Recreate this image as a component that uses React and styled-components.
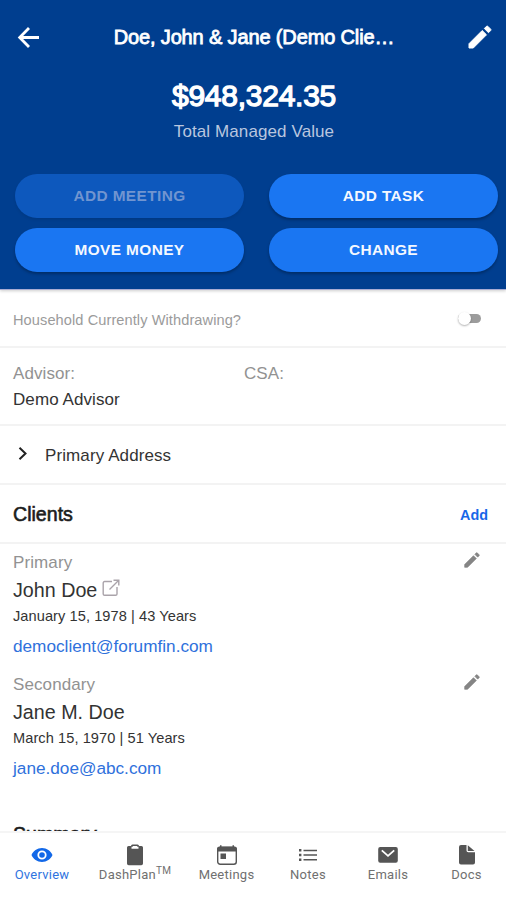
import React from 'react'
import styled, { createGlobalStyle } from 'styled-components'

const GlobalStyle = createGlobalStyle`
  * {
    box-sizing: border-box;
  }
  body {
    margin: 0;
    background: #fff;
    font-family: "Liberation Sans", Arial, sans-serif;
    color: #333;
  }
`

const Page = styled.div`
  height: 900px;
  display: flex;
  flex-direction: column;
  overflow: hidden;
`

const Header = styled.header`
  height: 290px;
  flex: none;
  background: #003e8f;
  border-bottom: 1px solid #a9acd3;
  box-shadow: 0 1px 3px rgba(0, 0, 0, .2);
  color: #fff;
`

const Toolbar = styled.div`
  height: 74px;
  padding: 0 14px 0 16px;
  display: flex;
  align-items: center;
  justify-content: space-between;
  svg {
    display: block;
  }
`

const Title = styled.h1`
  margin: 0;
  font-size: 20px;
  font-weight: 400;
  letter-spacing: -.14px;
  line-height: 24px;
  -webkit-text-stroke: .8px #fff;
`

const Amount = styled.div`
  margin-top: 4px;
  padding-left: 2px;
  font-size: 30px;
  letter-spacing: -.25px;
  line-height: 36px;
  text-align: center;
  -webkit-text-stroke: 1.3px #fff;
`

const AmountLabel = styled.div`
  margin-top: 8px;
  padding-left: 2px;
  font-size: 17px;
  line-height: 20px;
  letter-spacing: .1px;
  text-align: center;
  color: #b9c6df;
`

const Actions = styled.div`
  margin-top: 32px;
  padding: 0 8px 0 15px;
  display: grid;
  grid-template-columns: 229px 229px;
  justify-content: space-between;
  row-gap: 10px;
`

const ActionButton = styled.button`
  height: 44px;
  padding: 0;
  border: 0;
  border-radius: 22px;
  background: ${p => p.disabled ? '#0d58bd' : '#1a76f2'};
  color: ${p => p.disabled ? '#7195d0' : '#f4f8ff'};
  box-shadow: 0 2px 3px rgba(0, 0, 0, ${p => p.disabled ? .08 : .28});
  font-family: inherit;
  font-size: 15.4px;
  font-weight: 700;
  letter-spacing: .4px;
`

const Content = styled.main`
  flex: 1;
  min-height: 0;
  overflow: hidden;
`

const Row = styled.div`
  height: ${p => p.$height}px;
  padding: 0 18px 0 13px;
  display: flex;
  align-items: center;
  border-bottom: 2px solid #f3f3f3;
`

const Question = styled.div`
  flex: 1;
  padding-top: 4px;
  font-size: 14.6px;
  letter-spacing: .08px;
  color: #9b9b9b;
`

const Toggle = styled.div`
  width: 23px;
  height: 9px;
  margin-right: 7px;
  border-radius: 5px;
  background: #9c9c9c;
  &:before {
    content: '';
    display: block;
    width: 13px;
    height: 13px;
    margin-top: -2px;
    border-radius: 50%;
    background: #fff;
    box-shadow: 0 1px 2px rgba(0, 0, 0, .3);
  }
`

const Person = styled.div`
  width: 231px;
  align-self: flex-start;
  padding-top: 13px;
  font-size: 17px;
  letter-spacing: .08px;
  line-height: 26px;
`

const Muted = styled.div`
  color: #929292;
`

const AddressLabel = styled.div`
  padding-top: 3px;
  margin-left: 15px;
  font-size: 17px;
  letter-spacing: .1px;
`

const SectionTitle = styled.h2`
  flex: 1;
  margin: 0;
  padding-top: 2px;
  font-size: 19.6px;
  font-weight: 400;
  color: #1c1c1c;
  -webkit-text-stroke: .6px #1c1c1c;
`

const AddLink = styled.a`
  padding-top: 3px;
  font-size: 14.4px;
  font-weight: 700;
  color: #1767e8;
`

const Client = styled.section`
  height: 121.5px;
  padding: 8px 26px 0 13px;
  display: flex;
  justify-content: space-between;
`

const Role = styled.div`
  font-size: 17px;
  line-height: 22px;
  letter-spacing: .1px;
  color: #929292;
`

const Name = styled.div`
  height: 28px;
  display: flex;
  align-items: center;
  gap: 5px;
  padding-top: 5px;
  font-size: 19.7px;
  svg {
    margin-top: -5px;
  }
`

const Birth = styled.div`
  margin-top: 2px;
  font-size: 14.6px;
  letter-spacing: .07px;
  line-height: 24px;
`

const Email = styled.a`
  display: block;
  margin-top: 6px;
  font-size: 17.2px;
  line-height: 24px;
  color: #2f71dc;
`

const SummaryTitle = styled(SectionTitle)`
  padding: 36px 13px 0;
`

const TabBar = styled.nav`
  height: 69px;
  flex: none;
  display: grid;
  grid-template-columns: 84px 102px 81px 82px 78px 79px;
  border-top: 2px solid #f5f5f5;
  background: #fff;
`

const Tab = styled.div`
  display: flex;
  flex-direction: column;
  align-items: center;
  padding-top: 11px;
  font-family: Roboto, sans-serif;
  font-size: 13px;
  line-height: 16px;
  letter-spacing: .25px;
  white-space: nowrap;
  color: ${p => p.$active ? '#2f74e0' : '#707070'};
  svg {
    display: block;
    margin-bottom: 1px;
    color: ${p => p.$active ? '#1268e8' : '#555'};
  }
  sup {
    font-size: 10px;
    line-height: 0;
    vertical-align: 5px;
  }
`

const PencilIcon = ({ size, color }) => (
  <svg width={size} height={size} viewBox="0 0 24 24" fill={color} stroke={color} strokeWidth="1" strokeLinejoin="round">
    <path d="M1 18.700v4.300h4.300L18.500 9.800l-4.300-4.300zM22.700 5.500a1 1 0 0 0 0-1.300L19.800 1.300a1 1 0 0 0-1.300 0l-2.200 2.200 4.200 4.200z" />
  </svg>
)

const BackIcon = () => (
  <svg width="24" height="24" viewBox="0 0 24 24" fill="none" stroke="#fff" strokeWidth="2.8">
    <path d="M23 12.500H4M13 3l-9.300 9.500L13 22" />
  </svg>
)

const ChevronIcon = () => (
  <svg width="17" height="18" viewBox="0 0 17 18" fill="none" stroke="#222" strokeWidth="2">
    <path d="M6.500 1.800l6 5.700-6 5.700" />
  </svg>
)

const OpenIcon = () => (
  <svg width="18" height="18" viewBox="0 0 18 18" fill="none" stroke="#aaa3aa" strokeWidth="1.4">
    <path d="M10 2.500H2.600A1.400 1.400 0 0 0 1.200 3.900v11a1.400 1.400 0 0 0 1.400 1.400h11a1.400 1.400 0 0 0 1.400-1.400V8" />
    <path d="M7.500 10.500l9-9M11.500 1.200h5.300v5.300" />
  </svg>
)

const EyeIcon = () => (
  <svg width="22" height="22" viewBox="0 0 22 22">
    <path fill="currentColor" fillRule="evenodd" d="M11 4C6.200 4 2.200 6.900.5 11c1.700 4.100 5.700 7 10.500 7s8.800-2.900 10.500-7C19.800 6.900 15.800 4 11 4zm0 11.600a4.600 4.600 0 1 1 0-9.200 4.600 4.600 0 0 1 0 9.200z" />
    <circle cx="11" cy="11" r="2.800" fill="currentColor" />
  </svg>
)

const ClipboardIcon = () => (
  <svg width="22" height="22" viewBox="0 0 22 22" fill="currentColor">
    <path fillRule="evenodd" d="M4.500 2H7a1.500 1.500 0 0 1 1.500-1.500h5A1.500 1.500 0 0 1 15 2h2.500A1.500 1.500 0 0 1 19 3.500v16a1.700 1.700 0 0 1-1.700 1.700H4.700A1.700 1.700 0 0 1 3 19.500v-16A1.500 1.500 0 0 1 4.500 2zm3 .8v1.900h7V2.800h-1.300V2H8.800v.8z" />
  </svg>
)

const CalendarIcon = () => (
  <svg width="22" height="22" viewBox="0 0 22 22">
    <rect x="1.700" y="3.500" width="18.600" height="16.700" rx="2.500" fill="none" stroke="currentColor" strokeWidth="1.400" />
    <path fill="currentColor" d="M1 7.500V5a2.600 2.600 0 0 1 2.600-2.600H4V1.300h1.500v1.100h11V1.300H18v1.100h.4A2.600 2.600 0 0 1 21 5v2.500zM4.500 9.500H10v5.500H4.500z" />
  </svg>
)

const ListIcon = () => (
  <svg width="22" height="22" viewBox="0 0 22 22" stroke="currentColor">
    <path strokeWidth="1.400" d="M6.500 6.500H20M6.500 11H20M6.500 15.700H20" />
    <path strokeWidth="2.400" d="M2 6.200h2.400M2 11h2.400M2 15.700h2.400" />
  </svg>
)

const MailIcon = () => (
  <svg width="22" height="22" viewBox="0 0 22 22">
    <rect x="1.200" y="3" width="19.600" height="15.800" rx="2" fill="currentColor" />
    <path d="M4.800 6.300L11 11.800l6.200-5.500" fill="none" stroke="#fff" strokeWidth="1.800" />
  </svg>
)

const DocIcon = () => (
  <svg width="22" height="22" viewBox="0 0 22 22">
    <path fill="currentColor" d="M5 1h5.500v5.500A1.800 1.800 0 0 0 12.300 8.300H19v10.200a2 2 0 0 1-2 2H5a2 2 0 0 1-2-2V3a2 2 0 0 1 2-2zm6.800.3L18.500 7h-6.700z" />
  </svg>
)

const clients = [
  {
    role: 'Primary',
    name: 'John Doe',
    birth: 'January 15, 1978 | 43 Years',
    email: 'democlient@forumfin.com',
    linked: true
  },
  {
    role: 'Secondary',
    name: 'Jane M. Doe',
    birth: 'March 15, 1970 | 51 Years',
    email: 'jane.doe@abc.com'
  }
]

const tabs = [
  { label: 'Overview', icon: EyeIcon, active: true },
  { label: <span>DashPlan<sup>TM</sup></span>, icon: ClipboardIcon },
  { label: 'Meetings', icon: CalendarIcon },
  { label: 'Notes', icon: ListIcon },
  { label: 'Emails', icon: MailIcon },
  { label: 'Docs', icon: DocIcon }
]

export default function App() {
  return (
    <Page>
      <GlobalStyle />
      <Header>
        <Toolbar>
          <BackIcon />
          <Title>Doe, John &amp; Jane (Demo Clie…</Title>
          <PencilIcon size={24} color="#fff" />
        </Toolbar>
        <Amount>$948,324.35</Amount>
        <AmountLabel>Total Managed Value</AmountLabel>
        <Actions>
          <ActionButton disabled>ADD MEETING</ActionButton>
          <ActionButton>ADD TASK</ActionButton>
          <ActionButton>MOVE MONEY</ActionButton>
          <ActionButton>CHANGE</ActionButton>
        </Actions>
      </Header>
      <Content>
        <Row $height={58}>
          <Question>Household Currently Withdrawing?</Question>
          <Toggle />
        </Row>
        <Row $height={78}>
          <Person>
            <Muted>Advisor:</Muted>
            <div>Demo Advisor</div>
          </Person>
          <Person>
            <Muted>CSA:</Muted>
          </Person>
        </Row>
        <Row $height={59}>
          <ChevronIcon />
          <AddressLabel>Primary Address</AddressLabel>
        </Row>
        <Row $height={59}>
          <SectionTitle>Clients</SectionTitle>
          <AddLink>Add</AddLink>
        </Row>
        {clients.map(client => (
          <Client key={client.role}>
            <div>
              <Role>{client.role}</Role>
              <Name>
                {client.name}
                {client.linked && <OpenIcon />}
              </Name>
              <Birth>{client.birth}</Birth>
              <Email>{client.email}</Email>
            </div>
            <PencilIcon size={16} color="#858585" />
          </Client>
        ))}
        <SummaryTitle>Summary</SummaryTitle>
      </Content>
      <TabBar>
        {tabs.map(({ label, icon: Icon, active }, i) => (
          <Tab key={i} $active={active}>
            <Icon />
            {label}
          </Tab>
        ))}
      </TabBar>
    </Page>
  )
}
